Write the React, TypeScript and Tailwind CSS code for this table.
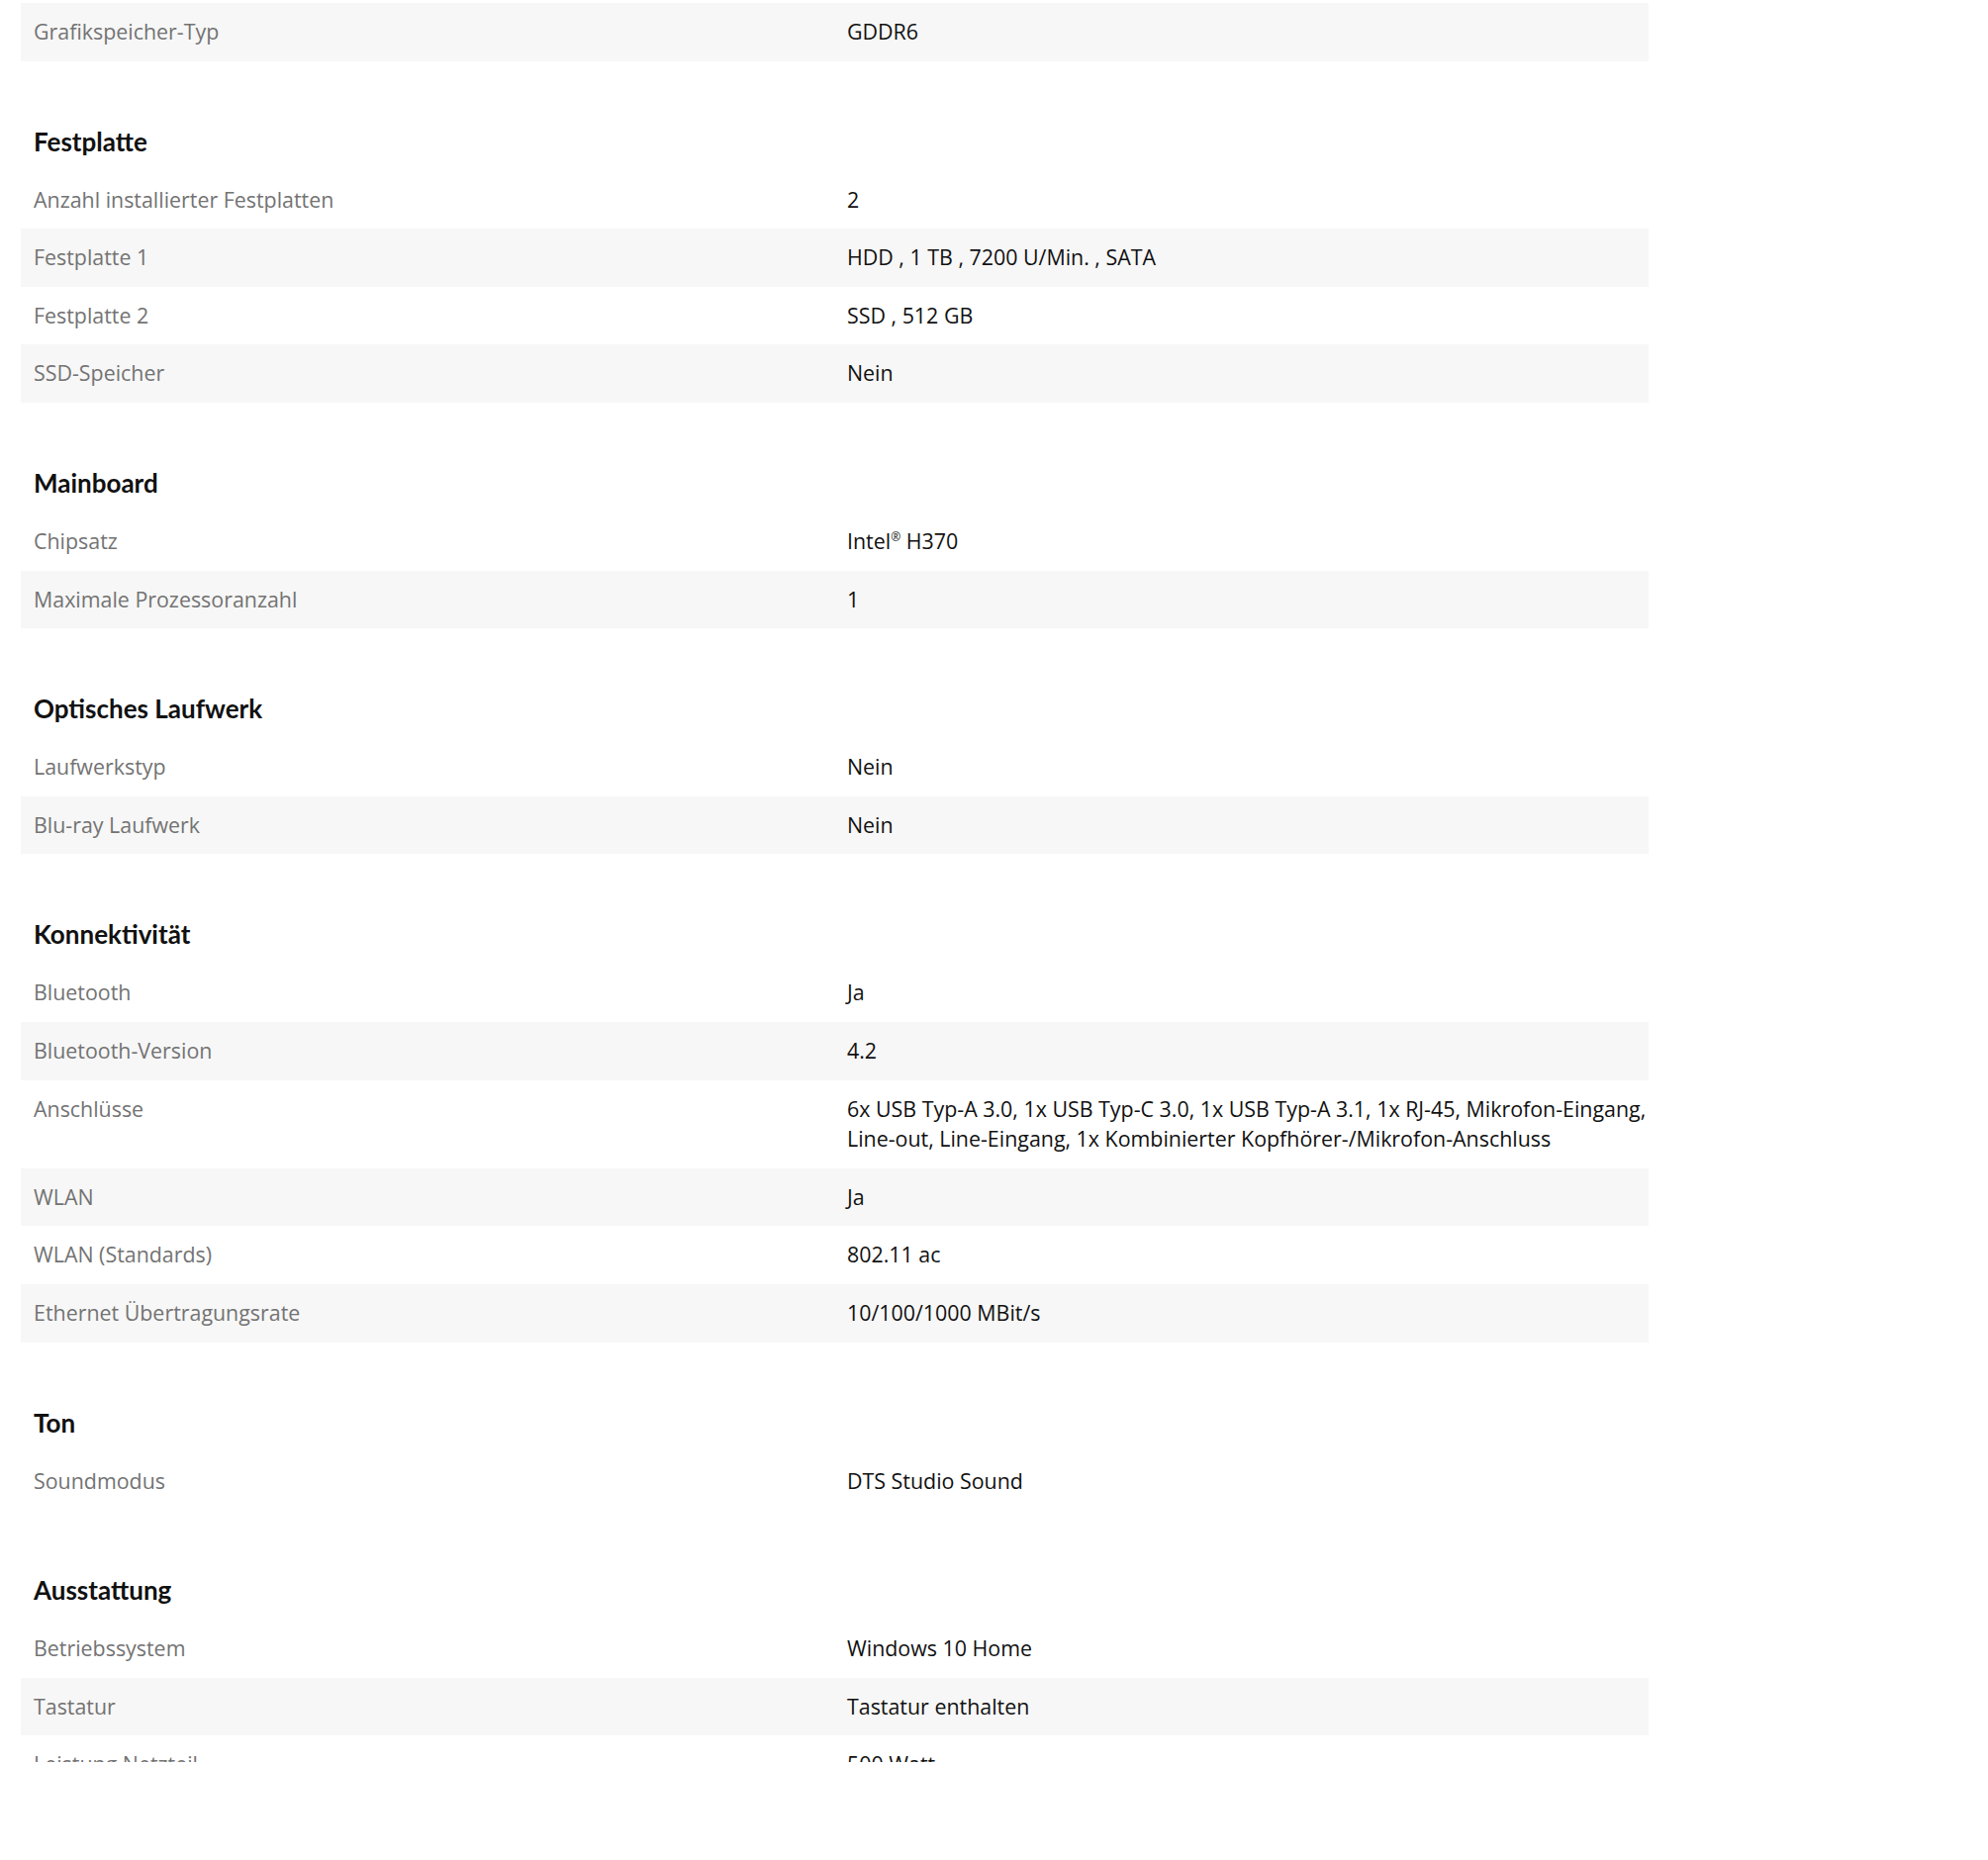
type Row = { label: string; value: React.ReactNode };
type Section = { title?: string; rows: Row[]; offset?: number };

const sections: Section[] = [
  { rows: [{ label: "Grafikspeicher-Typ", value: "GDDR6" }], offset: 1 },
  {
    title: "Festplatte",
    rows: [
      { label: "Anzahl installierter Festplatten", value: "2" },
      { label: "Festplatte 1", value: "HDD , 1 TB , 7200 U/Min. , SATA" },
      { label: "Festplatte 2", value: "SSD , 512 GB" },
      { label: "SSD-Speicher", value: "Nein" },
    ],
  },
  {
    title: "Mainboard",
    rows: [
      {
        label: "Chipsatz",
        value: (
          <>
            Intel<sup className="text-[12px] -top-[8px]">®</sup> H370
          </>
        ),
      },
      { label: "Maximale Prozessoranzahl", value: "1" },
    ],
  },
  {
    title: "Optisches Laufwerk",
    rows: [
      { label: "Laufwerkstyp", value: "Nein" },
      { label: "Blu-ray Laufwerk", value: "Nein" },
    ],
  },
  {
    title: "Konnektivität",
    rows: [
      { label: "Bluetooth", value: "Ja" },
      { label: "Bluetooth-Version", value: "4.2" },
      {
        label: "Anschlüsse",
        value: (
          <>
            6x USB Typ-A 3.0, 1x USB Typ-C 3.0, 1x USB Typ-A 3.1, 1x RJ-45, Mikrofon-Eingang,
            <br />
            Line-out, Line-Eingang, 1x Kombinierter Kopfhörer-/Mikrofon-Anschluss
          </>
        ),
      },
      { label: "WLAN", value: "Ja" },
      { label: "WLAN (Standards)", value: "802.11 ac" },
      { label: "Ethernet Übertragungsrate", value: "10/100/1000 MBit/s" },
    ],
  },
  {
    title: "Ton",
    rows: [{ label: "Soundmodus", value: "DTS Studio Sound" }],
  },
  {
    title: "Ausstattung",
    rows: [
      { label: "Betriebssystem", value: "Windows 10 Home" },
      { label: "Tastatur", value: "Tastatur enthalten" },
      { label: "Leistung Netzteil", value: "500 Watt" },
    ],
  },
];

export default function App() {
  return (
    <div
      className="h-[1781px] overflow-hidden bg-white pt-[3px] text-[21.4px]"
      style={{ fontFamily: "'Open Sans', 'Liberation Sans', sans-serif" }}
    >
      <div className="ml-[21px] w-[1645px]">
        {sections.map((s, si) => (
          <section key={si}>
            {s.title && (
              <h2
                className="pt-[63px] pb-[12px] pl-[13px] text-[26px] leading-[36px] font-bold text-[#111111]"
                style={{ fontFamily: "Lato, 'Liberation Sans', sans-serif" }}
              >
                {s.title}
              </h2>
            )}
            {s.rows.map((r, ri) => (
              <div
                key={ri}
                className={
                  "grid grid-cols-[822px_1fr] px-[13px] py-[14px] leading-[30.6px] " +
                  ((ri + (s.offset ?? 0)) % 2 === 1 ? "bg-[#f7f7f7]" : "bg-white")
                }
              >
                <div className="text-[#737373]">{r.label}</div>
                <div className="text-[#111111] whitespace-nowrap">{r.value}</div>
              </div>
            ))}
          </section>
        ))}
      </div>
    </div>
  );
}
